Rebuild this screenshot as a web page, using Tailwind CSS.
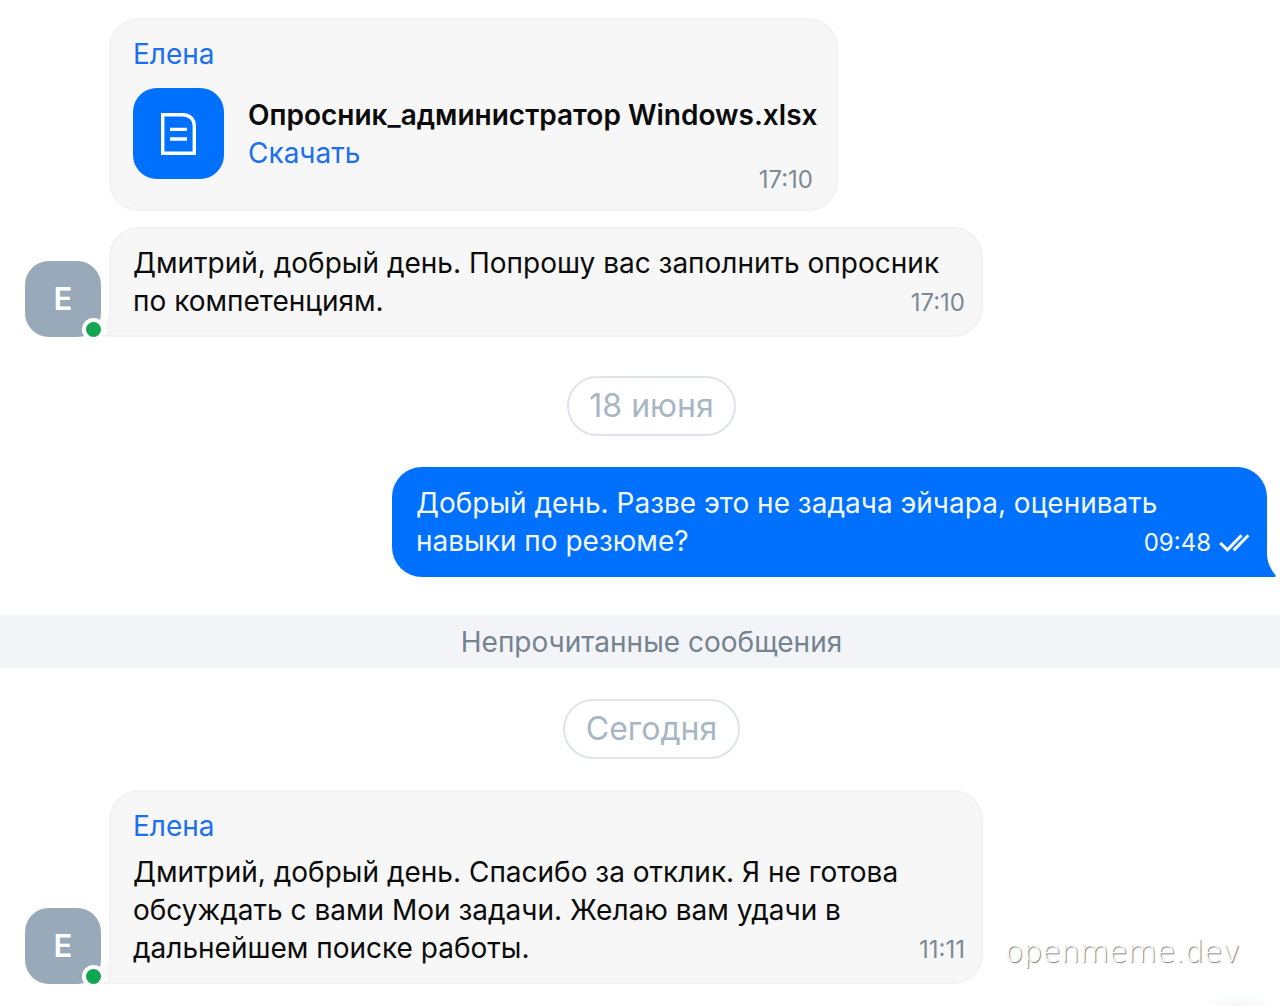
<!DOCTYPE html>
<html lang="ru">
<head>
  <meta charset="UTF-8" />
  <meta name="viewport" content="width=device-width, initial-scale=1" />
  <title>Чат с Еленой</title>
  <script src="https://cdn.jsdelivr.net/npm/@tailwindcss/browser@4"></script>
</head>
<body class="relative min-h-screen overflow-x-hidden bg-white pt-[18px] text-[28px] leading-[38px] text-[#0b0b0b] font-[Inter,'Liberation_Sans',sans-serif]">

  <main class="flex flex-col">

    <!-- file message -->
    <article class="relative ml-[109px] w-[729px] max-w-full rounded-[30px] border-2 border-[#f2f2f2] bg-[#f7f7f7] px-[22px] pt-[15px] pb-[30px]">
      <h2 class="text-[#1b6ff0]">Елена</h2>
      <div class="mt-[15px] flex gap-6">
        <div class="flex size-[91px] shrink-0 items-center justify-center rounded-[24px] bg-[#0070ff]">
          <svg class="h-[42px] w-[35px]" viewBox="0 0 35 42" fill="none" stroke="#fff" stroke-width="3.4">
            <path d="M1.7 1.7H21.5C28.5 1.7 33.3 6 33.3 13V40.3H1.7Z" />
            <path d="M9 16.4H26M9 26H26" />
          </svg>
        </div>
        <div class="pt-2">
          <p class="font-semibold whitespace-nowrap">Опросник_администратор Windows.xlsx</p>
          <a href="#" class="text-[#1b6ff0]">Скачать</a>
        </div>
      </div>
      <time class="absolute right-[23px] bottom-[10px] text-2xl leading-[38px] text-[#7d8994]">17:10</time>
    </article>

    <!-- incoming message -->
    <div class="mt-4 flex items-end pl-[25px]">
      <div class="relative z-10 flex size-[76px] shrink-0 items-center justify-center rounded-[24px] bg-[#98a9b9] text-[31px] font-semibold text-white">
        E
        <span class="absolute -right-1 -bottom-1 size-[23px] rounded-full border-4 border-white bg-[#12a552]"></span>
      </div>
      <span class="-ml-5 h-5 w-[30px] border-b-2 border-[#f2f2f2] bg-[linear-gradient(to_right,white_66%,#f7f7f7_90%)]"></span>
      <article class="relative -ml-0.5 w-[874px] max-w-full rounded-[30px] rounded-bl-none border-2 border-[#f2f2f2] bg-[#f7f7f7] px-[22px] pt-[15px] pb-[15px]">
        <p>Дмитрий, добрый день. Попрошу вас заполнить опросник<br />по компетенциям.</p>
        <time class="absolute right-4 bottom-[13px] text-2xl leading-[38px] text-[#7d8994]">17:10</time>
      </article>
    </div>

    <!-- date -->
    <div class="mt-[39px] flex justify-center pl-[23px]">
      <time class="rounded-full border-2 border-[#e0e3e9] px-5 py-[9px] text-[32px] leading-[38px] text-[#a8b6c3]">18 июня</time>
    </div>

    <!-- own message -->
    <div class="mt-[31px] flex justify-end pr-[13px]">
      <article class="relative w-[875px] max-w-full rounded-[30px] rounded-br-none bg-[#0070ff] px-6 pt-[17px] pb-[17px] text-[#f3f8ff]">
        <p>Добрый день. Разве это не задача эйчара, оценивать<br />навыки по резюме?</p>
        <div class="absolute right-[17px] bottom-[15px] flex items-center gap-2 text-2xl leading-[38px]">
          <time>09:48</time>
          <svg class="h-[18px] w-[31px]" viewBox="0 0 31 18" fill="none" stroke="currentColor" stroke-width="3">
            <path d="M1.2 8.8L8.4 15.8L22.6 1.2M14.6 16.4L29.4 1.2" />
          </svg>
        </div>
        <svg class="absolute -right-[9px] bottom-0 h-[22px] w-[10px]" viewBox="0 0 10 22" fill="#0070ff">
          <path d="M0 0H1C1.6 8 4.5 14 9.4 20Q10.2 22 8.5 22H0Z" />
        </svg>
      </article>
    </div>

    <!-- unread divider -->
    <div class="mt-[38px] bg-[#f2f4f8] pt-2 pb-[7px] pl-[23px] text-center text-[#75838f]">Непрочитанные сообщения</div>

    <div class="mt-[31px] flex justify-center pl-[23px]">
      <time class="rounded-full border-2 border-[#e0e3e9] px-[21px] py-[9px] text-[32px] leading-[38px] text-[#a8b6c3]">Сегодня</time>
    </div>

    <!-- incoming message -->
    <div class="mt-[31px] flex items-end pl-[25px]">
      <div class="relative z-10 flex size-[76px] shrink-0 items-center justify-center rounded-[24px] bg-[#98a9b9] text-[31px] font-semibold text-white">
        E
        <span class="absolute -right-1 -bottom-1 size-[23px] rounded-full border-4 border-white bg-[#12a552]"></span>
      </div>
      <span class="-ml-5 h-5 w-[30px] border-b-2 border-[#f2f2f2] bg-[linear-gradient(to_right,white_66%,#f7f7f7_90%)]"></span>
      <article class="relative -ml-0.5 w-[874px] max-w-full rounded-[30px] rounded-bl-none border-2 border-[#f2f2f2] bg-[#f7f7f7] px-[22px] pt-[15px] pb-[15px]">
        <h2 class="text-[#1b6ff0]">Елена</h2>
        <p class="mt-2">Дмитрий, добрый день. Спасибо за отклик. Я не готова<br />обсуждать с вами Мои задачи. Желаю вам удачи в<br />дальнейшем поиске работы.</p>
        <time class="absolute right-4 bottom-[13px] text-2xl leading-[38px] text-[#7d8994]">11:11</time>
      </article>
    </div>
  </main>

  <!-- watermark -->
  <div class="absolute right-10 bottom-8 font-['DejaVu_Sans',sans-serif] text-[30px] leading-[44px] font-extralight text-white [text-shadow:1px_1px_1px_#777]">openmeme.dev</div>

  <!-- scroll button shadow -->
  <div class="absolute right-0 bottom-0 h-3 w-20 bg-[radial-gradient(ellipse_at_bottom,#f4f6f8,white_70%)]"></div>
</body>
</html>
